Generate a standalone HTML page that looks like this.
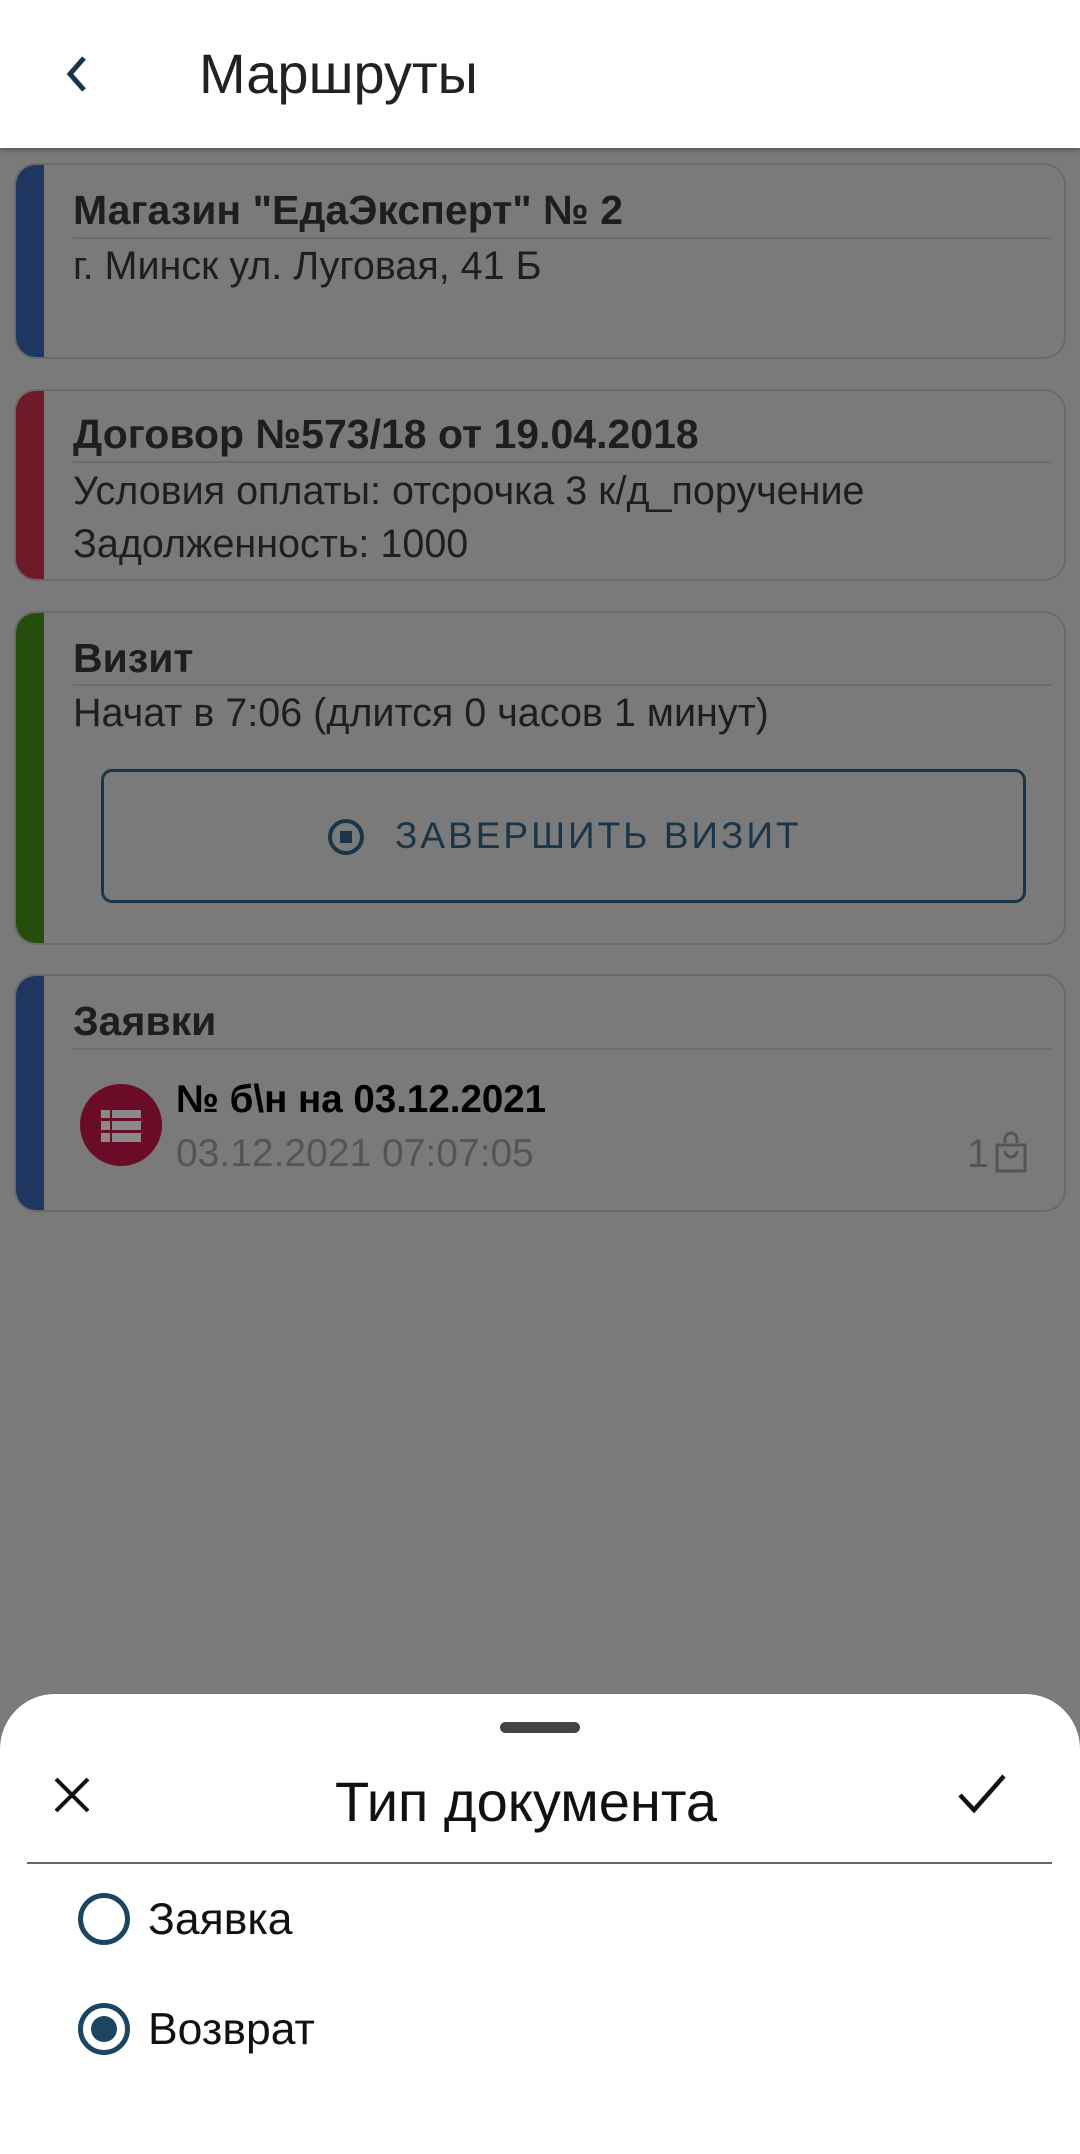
<!DOCTYPE html>
<html><head><meta charset="utf-8"><style>
*{margin:0;padding:0;box-sizing:border-box}
body{width:1080px;height:2154px;background:#7a7a7a;font-family:"Liberation Sans",sans-serif;position:relative;overflow:hidden;color:#1a1a1a}
.hdr{position:absolute;left:0;top:0;width:1080px;height:148px;background:#fff;box-shadow:0 2px 4px rgba(0,0,0,.3)}
.hdr .t{position:absolute;left:199px;top:41px;font-size:56px;color:#222}
.card{position:absolute;left:14px;width:1052px;border:2px solid #6a6a6a;border-radius:22px;overflow:hidden;background:#7a7a7a}
.stripe{position:absolute;left:0;top:0;bottom:0;width:28px}
.ti{position:absolute;left:57px;font-size:41px;font-weight:bold;color:#1e1e1e;white-space:nowrap}
.dv{position:absolute;left:57px;right:13px;height:2px;background:#6c6c6c}
.tx{position:absolute;left:57px;font-size:39.5px;color:#1e1e1e;white-space:nowrap}
.sheet{position:absolute;left:0;top:1694px;width:1080px;height:460px;background:#fff;border-radius:55px 55px 0 0}
</style></head><body>
<div class="hdr">
<svg style="position:absolute;left:60px;top:52px" width="36" height="44" viewBox="0 0 36 44"><path d="M24 6 L10 22 L24 38" fill="none" stroke="#1b3548" stroke-width="5"/></svg>
<div class="t">Маршруты</div>
</div>

<div class="card" style="top:163px;height:196px"><div class="stripe" style="background:#1e3660"></div>
<div class="ti" style="top:22px">Магазин "ЕдаЭксперт" № 2</div>
<div class="dv" style="top:72px"></div>
<div class="tx" style="top:79px">г. Минск ул. Луговая, 41 Б</div></div>

<div class="card" style="top:389px;height:192px"><div class="stripe" style="background:#6e1a28"></div>
<div class="ti" style="top:20px">Договор №573/18 от 19.04.2018</div>
<div class="dv" style="top:70px"></div>
<div class="tx" style="top:78px">Условия оплаты: отсрочка 3 к/д_поручение</div>
<div class="tx" style="top:131px">Задолженность: 1000</div></div>

<div class="card" style="top:611px;height:334px"><div class="stripe" style="background:#254d0c"></div>
<div class="ti" style="top:22px">Визит</div>
<div class="dv" style="top:71px"></div>
<div class="tx" style="top:78px">Начат в 7:06 (длится 0 часов 1 минут)</div>
<div style="position:absolute;left:85px;top:156px;width:925px;height:134px;border:3px solid #1b3548;border-radius:11px"></div>
<svg style="position:absolute;left:310px;top:204px" width="40" height="40" viewBox="0 0 40 40"><circle cx="20" cy="20" r="16" fill="none" stroke="#1b3548" stroke-width="4"/><rect x="14" y="14" width="12" height="12" fill="#1b3548"/></svg>
<div style="position:absolute;left:379px;top:202px;font-size:37px;letter-spacing:3px;color:#1b3548">ЗАВЕРШИТЬ ВИЗИТ</div></div>

<div class="card" style="top:974px;height:238px"><div class="stripe" style="background:#1e3660"></div>
<div class="ti" style="top:22px">Заявки</div>
<div class="dv" style="top:72px"></div>
<div style="position:absolute;left:64px;top:108px;width:82px;height:82px;border-radius:50%;background:#6a0c28"></div>
<svg style="position:absolute;left:85px;top:134px" width="40" height="32" viewBox="0 0 40 32"><g fill="#8a8a8a"><rect x="0" y="0" width="9" height="8"/><rect x="11" y="0" width="29" height="8"/><rect x="0" y="11" width="9" height="9"/><rect x="11" y="11" width="29" height="9"/><rect x="0" y="23" width="9" height="9"/><rect x="11" y="23" width="29" height="9"/></g></svg>
<div class="ti" style="left:160px;top:102px;color:#000;font-size:38.5px">№ б\н на 03.12.2021</div>
<div class="tx" style="left:160px;top:156px;color:#555;font-size:39px">03.12.2021 07:07:05</div>
<div class="tx" style="left:951px;top:156px;color:#555">1</div>
<svg style="position:absolute;left:978px;top:155px" width="34" height="44" viewBox="0 0 34 44"><path d="M11 12 V8 a6 6 0 0 1 12 0 V12 M3 14 H31 V40 H3 Z M11 20 a6 6 0 0 0 12 0" fill="none" stroke="#555" stroke-width="3"/></svg>
</div>

<div class="sheet">
<div style="position:absolute;left:500px;top:28px;width:80px;height:11px;border-radius:6px;background:#444"></div>
<svg style="position:absolute;left:52px;top:81px" width="40" height="40" viewBox="0 0 40 40"><path d="M4 4 L36 36 M36 4 L4 36" stroke="#111" stroke-width="4"/></svg>
<div style="position:absolute;left:0;width:1052px;text-align:center;top:75px;font-size:56px;color:#111">Тип документа</div>
<svg style="position:absolute;left:956px;top:78px" width="52" height="44" viewBox="0 0 52 44"><path d="M4 23 L18 38 L48 4" fill="none" stroke="#111" stroke-width="4.5"/></svg>
<div style="position:absolute;left:27px;top:168px;width:1025px;height:2px;background:#5a6a78"></div>
<div style="position:absolute;left:78px;top:199px;width:52px;height:52px;border-radius:50%;border:5px solid #1b4560"></div>
<div style="position:absolute;left:148px;top:201px;font-size:44.5px;color:#111">Заявка</div>
<div style="position:absolute;left:78px;top:309px;width:52px;height:52px;border-radius:50%;border:5px solid #1b4560"><div style="position:absolute;left:8px;top:8px;width:26px;height:26px;border-radius:50%;background:#1b4560"></div></div>
<div style="position:absolute;left:148px;top:311px;font-size:44.5px;color:#111">Возврат</div>
</div>
</body></html>
